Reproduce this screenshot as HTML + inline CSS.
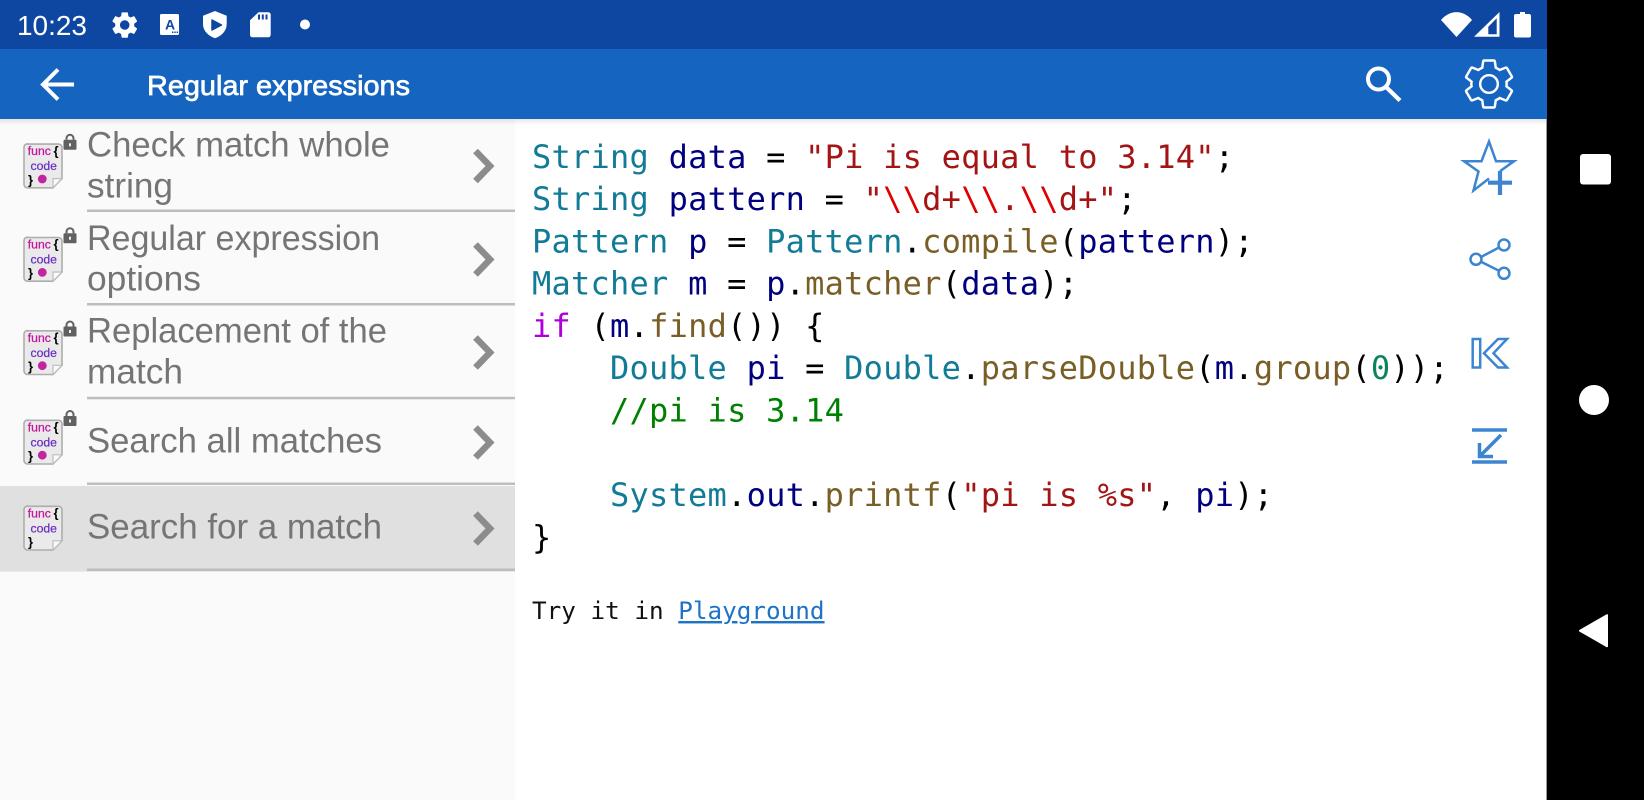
<!DOCTYPE html>
<html><head><meta charset="utf-8"><style>
html,body{margin:0;padding:0;background:#000;width:1644px;height:800px;overflow:hidden}
svg{display:block}
.c{font-family:"DejaVu Sans Mono","Liberation Mono",monospace;font-size:32px;letter-spacing:.24px;white-space:pre}
.l{font-family:"Liberation Sans",sans-serif;font-size:35px;fill:#757575}
.t{fill:#127b96}.v{fill:#00007f}.s{fill:#a31515}.e{fill:#e00000}.m{fill:#795e26}.k{fill:#af00db}.g{fill:#008000}.n{fill:#098658}.p{fill:#000}
.f{font-family:"Liberation Sans",sans-serif;font-size:12.2px;fill:#c2169f;stroke:#c2169f;stroke-width:.25px}
.d{font-family:"Liberation Sans",sans-serif;font-size:12.2px;fill:#6a2fc0;stroke:#6a2fc0;stroke-width:.25px}
.b{font-family:"Liberation Sans",sans-serif;font-size:13px;font-weight:bold;fill:#000}
</style></head><body>
<svg width="1644" height="800" viewBox="0 0 1644 800" xmlns="http://www.w3.org/2000/svg">
<defs><linearGradient id="sh" x1="0" y1="0" x2="0" y2="1"><stop offset="0" stop-color="#000" stop-opacity=".09"/><stop offset="1" stop-color="#000" stop-opacity="0"/></linearGradient></defs>
<rect width="1644" height="800" fill="#000"/>
<rect x="0" y="0" width="1547" height="800" fill="#fff"/>
<rect x="0" y="119" width="515" height="681" fill="#fafafa"/>
<rect x="1546" y="0" width="1" height="800" fill="#9a9a9a"/>
<rect x="0" y="486" width="515" height="85.700" fill="#e0e0e0"/>
<rect x="0" y="119" width="1546" height="6" fill="url(#sh)"/>
<rect x="0" y="0" width="1547" height="49" fill="#0d47a1"/>
<rect x="0" y="49" width="1547" height="70" fill="#1565c0"/>

<text x="17" y="35" font-family="Liberation Sans,sans-serif" font-size="28" fill="#fff" textLength="70" lengthAdjust="spacingAndGlyphs">10:23</text>
<g fill="#fff">
<path transform="translate(108.900 9.200) scale(1.320)" d="M19.14 12.94c.04-.3.06-.61.06-.94 0-.32-.02-.64-.07-.94l2.03-1.58c.18-.14.23-.41.12-.61l-1.92-3.32c-.12-.22-.37-.29-.59-.22l-2.39.96c-.5-.38-1.03-.7-1.62-.94l-.36-2.54c-.04-.24-.24-.41-.48-.41h-3.84c-.24 0-.43.17-.47.41l-.36 2.54c-.59.24-1.13.57-1.62.94l-2.39-.96c-.22-.08-.47 0-.59.22L2.74 8.87c-.12.21-.08.47.12.61l2.03 1.58c-.05.3-.09.63-.09.94s.02.64.07.94l-2.03 1.58c-.18.14-.23.41-.12.61l1.92 3.32c.12.22.37.29.59.22l2.39-.96c.5.38 1.03.7 1.62.94l.36 2.54c.05.24.24.41.48.41h3.84c.24 0 .44-.17.47-.41l.36-2.54c.59-.24 1.13-.56 1.62-.94l2.39.96c.22.08.47 0 .59-.22l1.92-3.32c.12-.22.07-.47-.12-.61l-2.01-1.58zM12 15.6c-1.98 0-3.6-1.62-3.6-3.6s1.62-3.6 3.6-3.6 3.6 1.62 3.6 3.6-1.62 3.6-3.6 3.6z" fill-rule="evenodd"/>
<rect x="160" y="14" width="19" height="21" rx="1.500"/>
<path d="M215 11l11.700 4.800v8.200c0 6.800-5 11.800-11.700 14.300-6.700-2.500-12-7.500-12-14.300v-8.200z"/>
<path d="M258.500 12.300h9.700a2.500 2.500 0 0 1 2.500 2.500v20a2.500 2.500 0 0 1-2.500 2.500h-15.700a2.500 2.500 0 0 1-2.500-2.500v-14.500z"/>
<circle cx="305" cy="24.500" r="5"/>
<path d="M1441 20c9-10.500 22-10.500 31 0l-15.500 17z"/>
<path d="M1474 36.700l25.500-24.700v24.700zM1488.300 34.300h8.400v-16l-8.400 8.400z" fill-rule="evenodd"/>
<path d="M1520 12h5v2h4a2 2 0 0 1 2 2v19.500a2 2 0 0 1-2 2h-13a2 2 0 0 1-2-2v-19.500a2 2 0 0 1 2-2h4z"/>
</g>
<text x="170" y="29.500" text-anchor="middle" font-family="Liberation Sans,sans-serif" font-weight="bold" font-size="14" fill="#0d47a1">A</text>
<path d="M212 20l9.500 5-9.500 5z" fill="#0d47a1" stroke="#0d47a1" stroke-width="1.500" stroke-linejoin="round"/>
<path d="M258 14.500h2v5h-2zM261.800 14.500h2v5h-2zM265.500 14.500h2v5h-2z" fill="#0d47a1"/>
<path d="M172 32.300h6" stroke="#0d47a1" stroke-width="1.500" stroke-dasharray="1.400 .9"/>

<path d="M74 84.500H44M58 69.500L43 84.500l15 15" fill="none" stroke="#fff" stroke-width="4"/>
<text x="147" y="95" font-family="Liberation Sans,sans-serif" font-size="28" fill="#fff" stroke="#fff" stroke-width=".7" textLength="263" lengthAdjust="spacingAndGlyphs">Regular expressions</text>
<circle cx="1378.500" cy="79" r="10.500" fill="none" stroke="#fff" stroke-width="4"/>
<path d="M1386 87l14 13.500" stroke="#fff" stroke-width="4.200" fill="none"/>
<path transform="translate(1459.600 54.600) scale(2.450)" fill="none" stroke="#fff" stroke-width="1" d="M19.14 12.94c.04-.3.06-.61.06-.94 0-.32-.02-.64-.07-.94l2.03-1.58c.18-.14.23-.41.12-.61l-1.92-3.32c-.12-.22-.37-.29-.59-.22l-2.39.96c-.5-.38-1.03-.7-1.62-.94l-.36-2.54c-.04-.24-.24-.41-.48-.41h-3.84c-.24 0-.43.17-.47.41l-.36 2.54c-.59.24-1.13.57-1.62.94l-2.39-.96c-.22-.08-.47 0-.59.22L2.74 8.87c-.12.21-.08.47.12.61l2.03 1.58c-.05.3-.09.63-.09.94s.02.64.07.94l-2.03 1.58c-.18.14-.23.41-.12.61l1.92 3.32c.12.22.37.29.59.22l2.39-.96c.5.38 1.03.7 1.62.94l.36 2.54c.05.24.24.41.48.41h3.84c.24 0 .44-.17.47-.41l.36-2.54c.59-.24 1.13-.56 1.62-.94l2.39.96c.22.08.47 0 .59-.22l1.92-3.32c.12-.22.07-.47-.12-.61l-2.01-1.58zM12 15.6c-1.98 0-3.6-1.62-3.6-3.6s1.62-3.6 3.6-3.6 3.6 1.62 3.6 3.6-1.62 3.6-3.6 3.6z"/>

<!-- list separators -->
<g fill="#bdbdbd">
<rect x="87" y="209.500" width="428" height="2.500"/><rect x="87" y="303" width="428" height="2.500"/><rect x="87" y="396.800" width="428" height="2.500"/><rect x="87" y="482.500" width="428" height="2.500"/><rect x="87" y="568.500" width="428" height="2.500"/>
</g>

<!-- list text -->
<text class="l" x="87" y="156.500" textLength="303" lengthAdjust="spacingAndGlyphs">Check match whole</text>
<text class="l" x="87" y="197.300" textLength="86" lengthAdjust="spacingAndGlyphs">string</text>
<text class="l" x="87" y="250" textLength="293" lengthAdjust="spacingAndGlyphs">Regular expression</text>
<text class="l" x="87" y="290.500" textLength="114" lengthAdjust="spacingAndGlyphs">options</text>
<text class="l" x="87" y="342.700" textLength="300" lengthAdjust="spacingAndGlyphs">Replacement of the</text>
<text class="l" x="87" y="383.300" textLength="96" lengthAdjust="spacingAndGlyphs">match</text>
<text class="l" x="87" y="452.700" textLength="295" lengthAdjust="spacingAndGlyphs">Search all matches</text>
<text class="l" x="87" y="538.700" textLength="295" lengthAdjust="spacingAndGlyphs">Search for a match</text>

<!-- chevrons -->
<g fill="none" stroke="#8c8c8c" stroke-width="6.500">
<path d="M475.500 151l14.500 15-14.500 15"/>
<path d="M475.500 244.500l14.500 15-14.500 15"/>
<path d="M475.500 337.500l14.500 15-14.500 15"/>
<path d="M475.500 427.500l14.500 15-14.500 15"/>
<path d="M475.500 513.500l14.500 15-14.500 15"/>
</g>

<!-- file icons -->
<g transform="translate(23 143.300)">
<path d="M4.500 .8h31a3.500 3.500 0 0 1 3.500 3.500v31l-9 9.200h-25.500a3.500 3.500 0 0 1-3.500-3.500v-37a3.500 3.500 0 0 1 3.500-3.500z" fill="#eaeaea" stroke="#adadad" stroke-width="1.600"/><path d="M39 35.300h-9v9.200z" fill="#fafafa" stroke="#bdbdbd" stroke-width="1.200"/>
<text x="4.800" y="11.800" class="f">func</text><text x="30.500" y="12" class="b">{</text>
<text x="7.500" y="26.800" class="d">code</text><text x="5" y="41" class="b">}</text>
<circle cx="19.300" cy="35.700" r="4.400" fill="#c2259e"/>
<rect x="40.500" y="-3.500" width="13" height="10" rx="1" fill="#616161"/><path d="M43.500 -3.500v-1.500a3.500 3.500 0 0 1 7 0v1.500" fill="none" stroke="#616161" stroke-width="2"/><rect x="46" y="0" width="2" height="3" fill="#eee"/>
</g>
<g transform="translate(23 236.700)">
<path d="M4.500 .8h31a3.500 3.500 0 0 1 3.500 3.500v31l-9 9.200h-25.500a3.500 3.500 0 0 1-3.500-3.500v-37a3.500 3.500 0 0 1 3.500-3.500z" fill="#eaeaea" stroke="#adadad" stroke-width="1.600"/><path d="M39 35.300h-9v9.200z" fill="#fafafa" stroke="#bdbdbd" stroke-width="1.200"/>
<text x="4.800" y="11.800" class="f">func</text><text x="30.500" y="12" class="b">{</text>
<text x="7.500" y="26.800" class="d">code</text><text x="5" y="41" class="b">}</text>
<circle cx="19.300" cy="35.700" r="4.400" fill="#c2259e"/>
<rect x="40.500" y="-3.500" width="13" height="10" rx="1" fill="#616161"/><path d="M43.500 -3.500v-1.500a3.500 3.500 0 0 1 7 0v1.500" fill="none" stroke="#616161" stroke-width="2"/><rect x="46" y="0" width="2" height="3" fill="#eee"/>
</g>
<g transform="translate(23 330)">
<path d="M4.500 .8h31a3.500 3.500 0 0 1 3.500 3.500v31l-9 9.200h-25.500a3.500 3.500 0 0 1-3.500-3.500v-37a3.500 3.500 0 0 1 3.500-3.500z" fill="#eaeaea" stroke="#adadad" stroke-width="1.600"/><path d="M39 35.300h-9v9.200z" fill="#fafafa" stroke="#bdbdbd" stroke-width="1.200"/>
<text x="4.800" y="11.800" class="f">func</text><text x="30.500" y="12" class="b">{</text>
<text x="7.500" y="26.800" class="d">code</text><text x="5" y="41" class="b">}</text>
<circle cx="19.300" cy="35.700" r="4.400" fill="#c2259e"/>
<rect x="40.500" y="-3.500" width="13" height="10" rx="1" fill="#616161"/><path d="M43.500 -3.500v-1.500a3.500 3.500 0 0 1 7 0v1.500" fill="none" stroke="#616161" stroke-width="2"/><rect x="46" y="0" width="2" height="3" fill="#eee"/>
</g>
<g transform="translate(23 419.500)">
<path d="M4.500 .8h31a3.500 3.500 0 0 1 3.500 3.500v31l-9 9.200h-25.500a3.500 3.500 0 0 1-3.500-3.500v-37a3.500 3.500 0 0 1 3.500-3.500z" fill="#eaeaea" stroke="#adadad" stroke-width="1.600"/><path d="M39 35.300h-9v9.200z" fill="#fafafa" stroke="#bdbdbd" stroke-width="1.200"/>
<text x="4.800" y="11.800" class="f">func</text><text x="30.500" y="12" class="b">{</text>
<text x="7.500" y="26.800" class="d">code</text><text x="5" y="41" class="b">}</text>
<circle cx="19.300" cy="35.700" r="4.400" fill="#c2259e"/>
<rect x="40.500" y="-3.500" width="13" height="10" rx="1" fill="#616161"/><path d="M43.500 -3.500v-1.500a3.500 3.500 0 0 1 7 0v1.500" fill="none" stroke="#616161" stroke-width="2"/><rect x="46" y="0" width="2" height="3" fill="#eee"/>
</g>
<g transform="translate(23 505.500)">
<path d="M4.500 .8h31a3.500 3.500 0 0 1 3.500 3.500v31l-9 9.200h-25.500a3.500 3.500 0 0 1-3.500-3.500v-37a3.500 3.500 0 0 1 3.500-3.500z" fill="#eaeaea" stroke="#adadad" stroke-width="1.600"/><path d="M39 35.300h-9v9.200z" fill="#fafafa" stroke="#bdbdbd" stroke-width="1.200"/>
<text x="4.800" y="11.800" class="f">func</text><text x="30.500" y="12" class="b">{</text>
<text x="7.500" y="26.800" class="d">code</text><text x="5" y="41" class="b">}</text>
</g>

<!-- code -->
<text class="c" x="532" y="168" xml:space="preserve"><tspan class="t">String</tspan> <tspan class="v">data</tspan> = <tspan class="s">"Pi is equal to 3.14"</tspan>;</text>
<text class="c" x="532" y="210.200" xml:space="preserve"><tspan class="t">String</tspan> <tspan class="v">pattern</tspan> = <tspan class="s">"</tspan><tspan class="e">\\</tspan><tspan class="s">d+</tspan><tspan class="e">\\</tspan><tspan class="s">.</tspan><tspan class="e">\\</tspan><tspan class="s">d+"</tspan>;</text>
<text class="c" x="532" y="252.500" xml:space="preserve"><tspan class="t">Pattern</tspan> <tspan class="v">p</tspan> = <tspan class="t">Pattern</tspan>.<tspan class="m">compile</tspan>(<tspan class="v">pattern</tspan>);</text>
<text class="c" x="532" y="294.700" xml:space="preserve"><tspan class="t">Matcher</tspan> <tspan class="v">m</tspan> = <tspan class="v">p</tspan>.<tspan class="m">matcher</tspan>(<tspan class="v">data</tspan>);</text>
<text class="c" x="532" y="337" xml:space="preserve"><tspan class="k">if</tspan> (<tspan class="v">m</tspan>.<tspan class="m">find</tspan>()) {</text>
<text class="c" x="532" y="379.200" xml:space="preserve">    <tspan class="t">Double</tspan> <tspan class="v">pi</tspan> = <tspan class="t">Double</tspan>.<tspan class="m">parseDouble</tspan>(<tspan class="v">m</tspan>.<tspan class="m">group</tspan>(<tspan class="n">0</tspan>));</text>
<text class="c" x="532" y="421.500" xml:space="preserve">    <tspan class="g">//pi is 3.14</tspan></text>
<text class="c" x="532" y="506" xml:space="preserve">    <tspan class="t">System</tspan>.<tspan class="v">out</tspan>.<tspan class="m">printf</tspan>(<tspan class="s">"pi is %s"</tspan>, <tspan class="v">pi</tspan>);</text>
<text class="c" x="532" y="548.300" xml:space="preserve">}</text>
<text x="532" y="619" font-family="DejaVu Sans Mono,monospace" font-size="24.300" fill="#111" xml:space="preserve">Try it in <tspan fill="#1e73c6" text-decoration="underline">Playground</tspan></text>

<!-- right icons -->
<g fill="none" stroke="#3d85d0" stroke-width="2.500">
<path d="M1489 178.500L1473.500 190.500l5-19-14.500-10.300h17.500L1489 141.500l7 19.700h18l-14 10"/>
<path d="M1488 182.700h24M1500 171v24" stroke-width="4.200"/>
<circle cx="1504" cy="245" r="5.500"/><circle cx="1476" cy="259.300" r="5.500"/><circle cx="1504" cy="273.300" r="5.500"/>
<path d="M1499 247.500l-18 9.500M1481 261.800l18 9"/>
<path d="M1472.700 339h7.500v28.500h-7.500z"/>
<path d="M1484 353.200L1498 339h9l-13.500 14.200 13.500 14.300h-9z"/>
<path d="M1472 430h35M1472 462h35" stroke-width="3.500"/>
<path d="M1501 435l-21 21M1479.500 443v13.500h13.500" stroke-width="3.500"/>
</g>

<!-- nav -->
<rect x="1580" y="154" width="31" height="30.500" rx="3" fill="#fff"/>
<circle cx="1594" cy="400" r="15" fill="#fff"/>
<path d="M1580 630.700l27-15.500v31z" fill="#fff" stroke="#fff" stroke-width="2" stroke-linejoin="round"/>
</svg>
</body></html>
